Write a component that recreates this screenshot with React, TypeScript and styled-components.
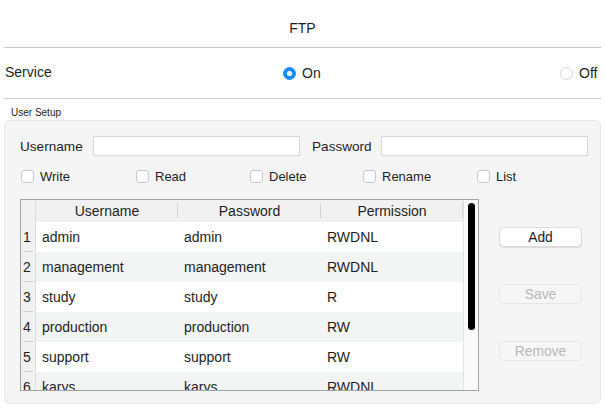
import { Fragment } from "react";
import styled, { createGlobalStyle } from "styled-components";

const GlobalStyle = createGlobalStyle`
  body {
    margin: 0;
    background: #ffffff;
    font-family: "Liberation Sans", Arial, Helvetica, sans-serif;
    color: #1e1e1e;
  }
`;

const Page = styled.div`
  width: 605px;
  height: 409px;
  overflow: hidden;
`;

const Header = styled.div`
  height: 47px;
  box-sizing: border-box;
  padding-top: 20px;
  text-align: center;
  font-size: 14px;
  line-height: 16px;
`;

const Divider = styled.div`
  margin: 0 4px;
  height: 1px;
  background: #c9c9c9;
`;

const ServiceRow = styled.div`
  height: 50px;
  display: grid;
  grid-template-columns: 278px 277px 1fr;
  align-items: center;
  padding-left: 5px;
  padding-bottom: 2px;
  box-sizing: border-box;
  font-size: 14px;
`;

const RadioOption = styled.label`
  display: flex;
  align-items: center;
  gap: 6px;
  padding-top: 2px;
`;

const RadioDot = styled.span<{ $on?: boolean }>`
  width: 13px;
  height: 13px;
  border-radius: 50%;
  box-sizing: border-box;
  display: inline-flex;
  align-items: center;
  justify-content: center;
  background: ${(p) => (p.$on ? "#1a8cff" : "#ffffff")};
  border: 1px solid ${(p) => (p.$on ? "#1a8cff" : "#d4d4d4")};
  &::after {
    content: "";
    width: 5px;
    height: 5px;
    border-radius: 50%;
    background: #ffffff;
    display: ${(p) => (p.$on ? "block" : "none")};
  }
`;

const GroupTitle = styled.div`
  height: 21px;
  box-sizing: border-box;
  padding: 8px 0 0 11px;
  font-size: 10px;
  line-height: 12px;
`;

const GroupBox = styled.div`
  margin: 0 4px;
  height: 284px;
  box-sizing: border-box;
  background: #f5f5f5;
  border: 1px solid #e7e7e7;
  border-radius: 6px;
  padding: 15px 0 0 15px;
`;

const FormRow = styled.div`
  display: flex;
  align-items: center;
  height: 20px;
  font-size: 13.6px;
`;

const FieldLabel = styled.span<{ $w: number }>`
  width: ${(p) => p.$w}px;
  box-sizing: border-box;
`;

const TextInput = styled.div<{ $w: number }>`
  width: ${(p) => p.$w}px;
  height: 20px;
  box-sizing: border-box;
  background: #ffffff;
  border: 1px solid #d8d8d8;
  margin-right: 12px;
`;

const CheckRow = styled.div`
  display: grid;
  grid-template-columns: 115px 114px 113px 114px 1fr;
  margin-top: 13px;
  padding-left: 1px;
  height: 13px;
  align-items: center;
  font-size: 13px;
`;

const CheckOption = styled.label`
  display: flex;
  align-items: center;
  gap: 6px;
`;

const CheckBox = styled.span`
  width: 13px;
  height: 13px;
  box-sizing: border-box;
  border: 1px solid #c9c9c9;
  border-radius: 3px;
  background: #ffffff;
`;

const Lower = styled.div`
  display: flex;
  margin-top: 17px;
`;

const Table = styled.div`
  width: 459px;
  height: 192px;
  box-sizing: border-box;
  border: 1px solid #a3a3a3;
  display: flex;
  background: #ffffff;
`;

const Grid = styled.div`
  display: grid;
  grid-template-columns: 15px 142px 143px 142px;
  grid-auto-rows: 30px;
  grid-template-rows: 22px;
  overflow: hidden;
  font-size: 14px;
`;

const HeadCell = styled.div<{ $first?: boolean }>`
  background: #f1f1f1;
  display: flex;
  align-items: center;
  justify-content: center;
  position: relative;
  border-right: ${(p) => (p.$first ? "1px solid #dcdcdc" : "none")};
  &::after {
    content: "";
    position: absolute;
    right: 0;
    top: 3px;
    bottom: 4px;
    width: 1px;
    background: ${(p) => (p.$first ? "transparent" : "#d6d6d6")};
  }
`;

const NumCell = styled.div`
  background: #f1f1f1;
  border-right: 1px solid #dcdcdc;
  display: flex;
  align-items: center;
  justify-content: center;
  padding-right: 2px;
  position: relative;
  &::after {
    content: "";
    position: absolute;
    left: 2px;
    right: 2px;
    bottom: 0;
    height: 1px;
    background: #d0d0d0;
  }
`;

const Cell = styled.div<{ $alt: boolean }>`
  background: ${(p) => (p.$alt ? "#f3f4f4" : "#ffffff")};
  display: flex;
  align-items: center;
  padding-left: 6px;
`;

const Track = styled.div`
  width: 15px;
  background: #fafafa;
  border-left: 1px solid #e4e4e4;
  box-sizing: border-box;
  padding: 3px 0 0 4px;
`;

const Thumb = styled.div`
  width: 7px;
  height: 127px;
  border-radius: 4px;
  background: #000000;
`;

const Buttons = styled.div`
  display: flex;
  flex-direction: column;
  gap: 37px;
  padding: 28px 0 0 20px;
`;

const Button = styled.div<{ $disabled?: boolean }>`
  width: 83px;
  height: 20px;
  box-sizing: border-box;
  border-radius: 5px;
  display: flex;
  align-items: center;
  justify-content: center;
  font-size: 13.8px;
  background: ${(p) => (p.$disabled ? "#f6f6f6" : "#ffffff")};
  color: ${(p) => (p.$disabled ? "#b8b8b8" : "#1e1e1e")};
  border: 1px solid ${(p) => (p.$disabled ? "#e6e6e6" : "#dcdcdc")};
  box-shadow: ${(p) => (p.$disabled ? "none" : "0 1px 1px rgba(0,0,0,0.12)")};
`;

const users = [
  { name: "admin", password: "admin", permission: "RWDNL" },
  { name: "management", password: "management", permission: "RWDNL" },
  { name: "study", password: "study", permission: "R" },
  { name: "production", password: "production", permission: "RW" },
  { name: "support", password: "support", permission: "RW" },
  { name: "karys", password: "karys", permission: "RWDNL" },
];

const permissions = ["Write", "Read", "Delete", "Rename", "List"];

function App() {
  return (
    <Page>
      <GlobalStyle />
      <Header>FTP</Header>
      <Divider />
      <ServiceRow>
        <span>Service</span>
        <RadioOption>
          <RadioDot $on />
          On
        </RadioOption>
        <RadioOption>
          <RadioDot />
          Off
        </RadioOption>
      </ServiceRow>
      <Divider />
      <GroupTitle>User Setup</GroupTitle>
      <GroupBox>
        <FormRow>
          <FieldLabel $w={73}>Username</FieldLabel>
          <TextInput $w={207} />
          <FieldLabel $w={69}>Password</FieldLabel>
          <TextInput $w={207} />
        </FormRow>
        <CheckRow>
          {permissions.map((p) => (
            <CheckOption key={p}>
              <CheckBox />
              {p}
            </CheckOption>
          ))}
        </CheckRow>
        <Lower>
          <Table>
            <Grid>
              <HeadCell $first />
              <HeadCell>Username</HeadCell>
              <HeadCell>Password</HeadCell>
              <HeadCell>Permission</HeadCell>
              {users.map((u, i) => (
                <Fragment key={u.name}>
                  <NumCell>{i + 1}</NumCell>
                  <Cell $alt={i % 2 === 1}>{u.name}</Cell>
                  <Cell $alt={i % 2 === 1}>{u.password}</Cell>
                  <Cell $alt={i % 2 === 1}>{u.permission}</Cell>
                </Fragment>
              ))}
            </Grid>
            <Track>
              <Thumb />
            </Track>
          </Table>
          <Buttons>
            <Button>Add</Button>
            <Button $disabled>Save</Button>
            <Button $disabled>Remove</Button>
          </Buttons>
        </Lower>
      </GroupBox>
    </Page>
  );
}

export default App;
